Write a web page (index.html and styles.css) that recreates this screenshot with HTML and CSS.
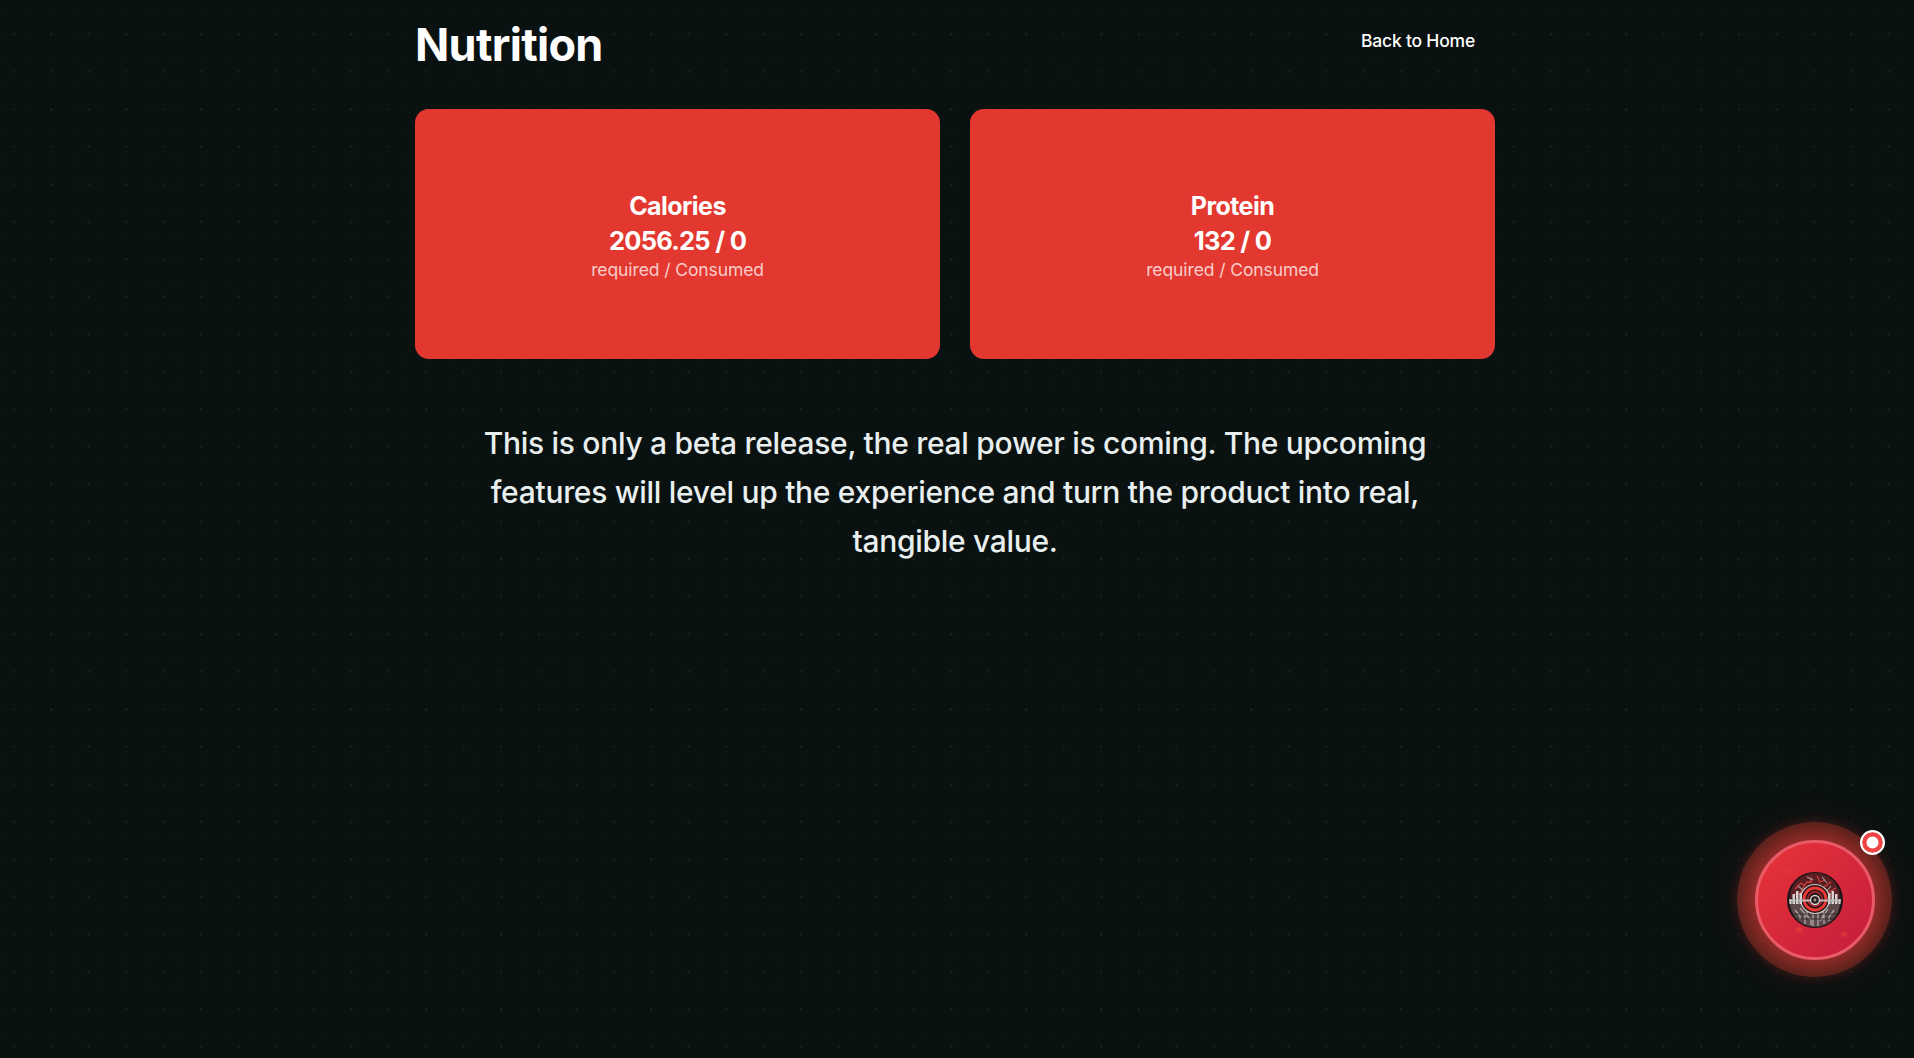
FILE: index.html
```html
<!DOCTYPE html>
<html lang="en">
<head>
<meta charset="utf-8">
<title>Nutrition</title>
<link rel="stylesheet" href="styles.css">
</head>
<body>
<main class="page">
  <header class="top">
    <h1 class="title">Nutrition</h1>
    <a class="back" href="#">Back to Home</a>
  </header>
  <section class="cards">
    <article class="card">
      <h2 class="card-name">Calories</h2>
      <p class="card-value">2056.25 / 0</p>
      <p class="card-note">required / Consumed</p>
    </article>
    <article class="card">
      <h2 class="card-name">Protein</h2>
      <p class="card-value">132 / 0</p>
      <p class="card-note">required / Consumed</p>
    </article>
  </section>
  <p class="beta">This is only a beta release, the real power is coming. The upcoming features will level up the experience and turn the product into real, tangible value.</p>
</main>
<button class="fab" type="button" aria-label="Assistant">
  <span class="fab-core">
    <i class="bubble bubble-a"></i>
    <i class="bubble bubble-b"></i>
    <i class="bubble bubble-c"></i>
    <svg class="logo" viewBox="0 0 56 56" width="56" height="56" aria-hidden="true">
      <circle cx="28" cy="28" r="27" fill="#2b2022" stroke="#1c1416" stroke-width="2"/>
      <path d="M3 26 A25 25 0 0 1 53 26 Z" fill="#5a1f22"/>
      <path d="M3 30 A25 25 0 0 0 53 30 Z" fill="#5b4a4c"/>
      <g fill="none" stroke="#c9403f" stroke-width="1.300">
        <path d="M8 17 L14 11 L18 14 M13 21 L20 10 L25 10 M24 5 V10 M30 4 L33 10 L38 8 M37 15 L44 10 M42 20 L49 16 M8 22 H15"/>
      </g>
      <g fill="none" stroke="#a89b9c" stroke-width="1.100">
        <path d="M20 5 L26 8 M35 5 L40 11 M11 14 L16 18 M44 14 L40 19"/>
      </g>
      <g fill="none" stroke="#b3a7a8" stroke-width="1.300">
        <path d="M8 38 L13 44 V48 M13 36 L18 42 V52 M20 38 V44 L24 48 V53 M26 42 V54 M31 42 V54 M36 38 V45 L33 49 M41 37 L37 43 V52 M47 38 L42 45 V49"/>
      </g>
      <g fill="none" stroke="#2b2022" stroke-width=".800">
        <path d="M7 42 H49 M10 47 H46"/>
      </g>
      <circle cx="28" cy="27" r="14.500" fill="#2a1416" stroke="#c9c2c2" stroke-width="1.200"/>
      <circle cx="28" cy="27" r="11" fill="none" stroke="#ed3a36" stroke-width="2.800"/>
      <circle cx="28" cy="27" r="7.200" fill="none" stroke="#b92b2e" stroke-width="1.500"/>
      <g fill="#d9d4d4">
        <rect x="2.500" y="27" width="2" height="5"/>
        <rect x="5.500" y="22" width="2.500" height="10"/>
        <rect x="9" y="19" width="2.500" height="13"/>
        <rect x="12.500" y="21" width="2.500" height="11"/>
        <rect x="41" y="21" width="2.500" height="11"/>
        <rect x="44.500" y="19" width="2.500" height="13"/>
        <rect x="48" y="22" width="2.500" height="10"/>
        <rect x="51.500" y="27" width="2" height="5"/>
      </g>
      <rect x="2" y="27.500" width="52" height="2" fill="#bfb8b8"/>
      <circle cx="28" cy="28" r="4.500" fill="#2a1e1f" stroke="#d8d2d2" stroke-width="1.400"/>
      <circle cx="28" cy="28" r="1.400" fill="#a59e9e"/>
    </svg>
  </span>
  <span class="badge"></span>
</button>
</body>
</html>
```

FILE: styles.css
```css
* { box-sizing: border-box; }
html, body { height: 100%; }
body {
  margin: 0;
  padding-right: 4px;
  overflow: hidden;
  background-color: #0a1111;
  background-image:
    radial-gradient(circle at center, rgba(255,255,255,.07) 0, rgba(255,255,255,.07) 1px, transparent 1.4px),
    radial-gradient(circle at center, rgba(255,255,255,.015) 0, rgba(255,255,255,.015) 1px, transparent 1.4px);
  background-size: 37.5px 37.5px, 25px 25px;
  background-position: -5px -22px, -11px -3px;
  font-family: "Inter", "Noto Sans", sans-serif;
  color: #fff;
}
.page { width: 1080px; margin: 0 auto; }
.top {
  display: flex;
  justify-content: space-between;
  align-items: center;
  height: 89px;
  padding-right: 20px;
}
.title { margin: 0; font-size: 45px; line-height: 1; font-weight: 700; letter-spacing: -.7px; }
.back { color: #fff; text-decoration: none; font-size: 17.500px; font-weight: 500; letter-spacing: -.2px; margin-bottom: 8px; }
.cards { display: grid; grid-template-columns: 1fr 1fr; gap: 30px; margin-top: 20px; }
.card {
  height: 250px;
  background: #e3382f;
  border-radius: 14px;
  display: flex;
  flex-direction: column;
  align-items: center;
  justify-content: center;
  text-align: center;
}
.card-name { margin: 0; padding-top: 2px; font-size: 25px; line-height: 35px; font-weight: 700; letter-spacing: -.55px; }
.card-value { margin: 0; font-size: 25.500px; line-height: 34px; font-weight: 700; letter-spacing: -.75px; }
.card-note { margin: 0; font-size: 17.500px; line-height: 24px; font-weight: 400; color: rgba(255,255,255,.75); letter-spacing: -.1px; }
.beta {
  width: 960px;
  margin: 60px auto 0;
  font-size: 30px;
  line-height: 49px;
  font-weight: 500;
  text-align: center;
  color: #e9eeee;
  letter-spacing: -.3px;
}
.fab {
  position: fixed;
  left: 1737px;
  top: 822px;
  width: 155px;
  height: 155px;
  padding: 0;
  border: 0;
  border-radius: 50%;
  background: radial-gradient(circle closest-side, #8f2a26 0, #8f2a26 77%, #5a211c 100%);
  box-shadow: 0 0 10px 2px rgba(120,35,30,.35), 0 0 30px 10px rgba(229,57,53,.05);
  display: flex;
  align-items: center;
  justify-content: center;
}
.fab-core {
  position: relative;
  width: 120px;
  height: 120px;
  border-radius: 50%;
  background: linear-gradient(135deg, #e83437, #c41c3e);
  border: 3px solid #e85a68;
  display: flex;
  align-items: center;
  justify-content: center;
}
.logo { display: block; }
.bubble { position: absolute; border-radius: 50%; background: rgba(255,90,50,.3); width: 6px; height: 6px; }
.bubble-a { left: 38px; top: 84px; }
.bubble-b { left: 83px; top: 88px; }
.bubble-c { left: 28px; top: 26px; background: rgba(255,90,50,.12); }
.badge {
  position: absolute;
  left: 123px;
  top: 8px;
  width: 25px;
  height: 25px;
  border-radius: 50%;
  background: #fff;
  border: 2px solid #fff;
  box-shadow: inset 0 0 0 4.500px #ef4444;
}
```
